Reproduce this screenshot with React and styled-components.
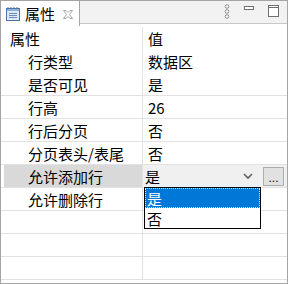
import React from 'react'
import styled, { createGlobalStyle } from 'styled-components'

const GlobalStyle = createGlobalStyle`
  html, body {
    margin: 0;
    padding: 0;
    background: #ffffff;
  }
  body {
    font-family: "Noto Sans CJK SC", "Noto Sans", sans-serif;
  }
`

const Panel = styled.div`
  position: relative;
  width: 288px;
  height: 284px;
  box-sizing: border-box;
  border: 1px solid #a5a5a5;
  border-top: none;
  background: #ffffff;
  display: flex;
  flex-direction: column;
  overflow: hidden;
`

const TabBar = styled.div`
  display: flex;
  height: 26px;
  flex: none;
`

const Tab = styled.div`
  display: flex;
  align-items: center;
  width: 79px;
  box-sizing: border-box;
  padding-left: 4px;
  background: #ffffff;
  border-right: 1px solid #a5a5a5;
  border-top: 1px solid #a5a5a5;
  font-size: 15px;
  color: #000;
`

const TabTitle = styled.span`
  margin-left: 4px;
  line-height: 20px;
`

const TabClose = styled.svg`
  margin-left: 8px;
  margin-top: 1px;
`

const TabFill = styled.div`
  flex: 1;
  display: flex;
  align-items: flex-start;
  justify-content: flex-end;
  padding-right: 8px;
  padding-top: 3px;
  background: #f2f2f2;
  border-top: 1px solid #a5a5a5;
  border-bottom: 1px solid #c8c8c8;
  margin-bottom: 2px;
`

const ToolIcon = styled.svg`
  display: block;
  margin-left: ${({ $gap }) => $gap}px;
`

const Table = styled.div`
  flex: 1;
  display: flex;
  flex-direction: column;
  padding-top: 1px;
  font-size: 15px;
  color: #000;
`

const Row = styled.div`
  display: grid;
  grid-template-columns: 142px 1fr;
  height: 23px;
  box-sizing: border-box;
  border-bottom: 1px solid ${({ $line }) => ($line ? '#e2e2e2' : 'transparent')};
`

const NameCell = styled.div`
  display: flex;
  align-items: center;
  padding-left: ${({ $indent }) => ($indent ? 24 : 6)}px;
  margin-left: 3px;
  background: ${({ $active }) => ($active ? '#d9d9d9' : 'transparent')};
  border-right: 1px solid #e2e2e2;
  white-space: nowrap;
`

const ValueCell = styled.div`
  display: flex;
  align-items: center;
  min-width: 0;
  padding-left: ${({ $tight }) => ($tight ? 0 : 5)}px;
  white-space: nowrap;
`

const Combo = styled.div`
  flex: 1;
  display: flex;
  align-items: center;
  height: 100%;
  background: #f0f0f0;
  padding-left: 2px;
`

const ComboText = styled.span`
  flex: 1;
`

const Chevron = styled.svg`
  margin-right: 10px;
`

const MoreButton = styled.div`
  width: 21px;
  height: 19px;
  box-sizing: border-box;
  border: 1px solid #adadad;
  background: #e1e1e1;
  margin-right: 3px;
  display: flex;
  align-items: flex-end;
  justify-content: center;
  font-family: "Liberation Sans", sans-serif;
  font-size: 12px;
  line-height: 14px;
  color: #000;
`

const DropList = styled.div`
  position: absolute;
  left: 143px;
  top: 187px;
  width: 117px;
  box-sizing: border-box;
  border: 1px solid #000;
  background: #ffffff;
  font-size: 15px;
  display: flex;
  flex-direction: column;
`

const DropItem = styled.div`
  height: 20px;
  box-sizing: border-box;
  display: flex;
  align-items: center;
  padding-left: 2px;
  background: ${({ $selected }) => ($selected ? '#0078d7' : '#ffffff')};
  color: ${({ $selected }) => ($selected ? '#ffffff' : '#000')};
  outline: ${({ $selected }) => ($selected ? '1px dotted #cfe3f7' : 'none')};
  outline-offset: -1px;
`

const PropsIcon = () => (
  <svg width="16" height="16" viewBox="0 0 16 16">
    <rect x="1.5" y="2.5" width="13" height="12" fill="#dce8f6" stroke="#4f74a8" />
    <rect x="2" y="3" width="12" height="2" fill="#8fb0d9" />
    <line x1="4" y1="7.5" x2="12" y2="7.5" stroke="#6c8fbf" />
    <line x1="4" y1="9.5" x2="12" y2="9.5" stroke="#6c8fbf" />
    <line x1="4" y1="11.5" x2="12" y2="11.5" stroke="#6c8fbf" />
    <line x1="3" y1="1" x2="3" y2="3" stroke="#4f74a8" />
    <line x1="6" y1="1" x2="6" y2="3" stroke="#4f74a8" />
    <line x1="9" y1="1" x2="9" y2="3" stroke="#4f74a8" />
    <line x1="12" y1="1" x2="12" y2="3" stroke="#4f74a8" />
  </svg>
)

const rows = [
  { name: '行类型', value: '数据区' },
  { name: '是否可见', value: '是', line: true },
  { name: '行高', value: '26', line: true },
  { name: '行后分页', value: '否', line: true },
  { name: '分页表头/表尾', value: '否', line: true },
  { name: '允许添加行', value: '是', line: true, active: true },
  { name: '允许删除行', value: '', line: true },
  { name: '', value: '', line: true },
  { name: '', value: '', line: true },
  { name: '', value: '', line: true },
]

const App = () => (
  <>
    <GlobalStyle />
    <Panel>
      <TabBar>
        <Tab>
          <PropsIcon />
          <TabTitle>属性</TabTitle>
          <TabClose width="10" height="9" viewBox="0 0 10 9">
            <path
              d="M0.5 0.5 L3 0.5 L5 2.5 L7 0.5 L9.5 0.5 L6.5 4.5 L9.5 8.5 L7 8.5 L5 6.5 L3 8.5 L0.5 8.5 L3.5 4.5 Z"
              fill="none"
              stroke="#9a9a9a"
              strokeWidth="0.9"
            />
          </TabClose>
        </Tab>
        <TabFill>
          <ToolIcon width="6" height="16" viewBox="0 0 6 16" $gap={0}>
            <circle cx="3" cy="2.5" r="1.8" fill="#fff" stroke="#8a8a8a" />
            <circle cx="3" cy="7.5" r="1.8" fill="#fff" stroke="#8a8a8a" />
            <circle cx="3" cy="12.5" r="1.8" fill="#fff" stroke="#8a8a8a" />
          </ToolIcon>
          <ToolIcon width="12" height="12" viewBox="0 0 12 12" $gap={13}>
            <rect x="1.5" y="2.5" width="9" height="3" fill="#fff" stroke="#6e6e6e" />
          </ToolIcon>
          <ToolIcon width="12" height="13" viewBox="0 0 12 13" $gap={12}>
            <rect x="1.5" y="1.5" width="10" height="11" fill="#fff" stroke="#6e6e6e" />
            <line x1="1.5" y1="3.5" x2="11.5" y2="3.5" stroke="#6e6e6e" />
          </ToolIcon>
        </TabFill>
      </TabBar>
      <Table>
        <Row>
          <NameCell>属性</NameCell>
          <ValueCell>值</ValueCell>
        </Row>
        {rows.map(({ name, value, line, active }, i) => (
          <Row key={i} $line={line}>
            <NameCell $indent $active={active}>{name}</NameCell>
            {active ? (
              <ValueCell $tight>
                <Combo>
                  <ComboText>{value}</ComboText>
                  <Chevron width="10" height="7" viewBox="0 0 10 7">
                    <path d="M1 1 L5 5 L9 1" fill="none" stroke="#606060" strokeWidth="1.6" />
                  </Chevron>
                  <MoreButton>...</MoreButton>
                </Combo>
              </ValueCell>
            ) : (
              <ValueCell>{value}</ValueCell>
            )}
          </Row>
        ))}
      </Table>
      <DropList>
        <DropItem $selected>是</DropItem>
        <DropItem>否</DropItem>
      </DropList>
    </Panel>
  </>
)

export default App
